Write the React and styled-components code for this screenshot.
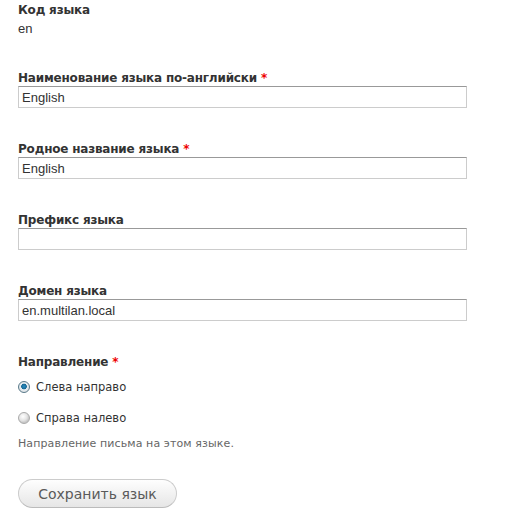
import React, { useState } from 'react';
import styled, { createGlobalStyle } from 'styled-components';

const GlobalStyle = createGlobalStyle`
  body {
    margin: 0;
    background: #fff;
    font-family: "DejaVu Sans", Verdana, sans-serif;
    color: #333;
  }
`;

const Form = styled.form`
  display: flex;
  flex-direction: column;
  padding: 2px 18px 0 18px;
  width: 449px;
`;

const Item = styled.div`
  display: flex;
  flex-direction: column;
  margin-bottom: ${(p) => p.gap || 33}px;
`;

const Label = styled.label`
  font-size: 12px;
  font-weight: bold;
  line-height: 16px;
  color: #333;
  letter-spacing: -0.2px;
`;

const Required = styled.span`
  color: #e00;
  margin-left: 4px;
`;

const Value = styled.div`
  font-family: "Liberation Sans", Arial, sans-serif;
  font-size: 13px;
  line-height: 16px;
  color: #333;
  margin-top: 3px;
`;

const TextInput = styled.input`
  box-sizing: border-box;
  height: 22px;
  width: 100%;
  padding: 2px 3px;
  font-family: "Liberation Sans", Arial, sans-serif;
  font-size: 13px;
  color: #333;
  border: 1px solid #ccc;
  border-top-color: #999;
  background: #fff;
  outline: none;
  margin: 0;
`;

const Radio = styled.label`
  display: flex;
  align-items: center;
  font-size: 11.5px;
  line-height: 16px;
  color: #333;
  margin-top: ${(p) => p.top}px;
  cursor: pointer;
`;

const Dot = styled.span`
  box-sizing: border-box;
  width: 12px;
  height: 12px;
  border-radius: 50%;
  margin-right: 6px;
  border: 1px solid ${(p) => (p.checked ? '#5a7a8a' : '#aaa')};
  background: ${(p) =>
    p.checked
      ? 'radial-gradient(circle at 50% 45%, #2a8fc4 0, #1a6a96 2.5px, #e8eef2 3.2px, #d8dde0 6px)'
      : 'radial-gradient(circle at 40% 35%, #fff 0, #e4e4e4 4px, #c8c8c8 6px)'};
`;

const Description = styled.div`
  font-size: 11px;
  line-height: 14px;
  color: #666;
  margin-top: 11px;
  letter-spacing: 0.1px;
`;

const Button = styled.button`
  align-self: flex-start;
  width: 159px;
  height: 29px;
  border-radius: 15px;
  border: 1px solid #ccc;
  border-bottom-color: #bbb;
  background: linear-gradient(#fefefe, #e6e6e6);
  color: #5a5a5a;
  font-family: "DejaVu Sans", Verdana, sans-serif;
  font-size: 14px;
  padding: 0;
  cursor: pointer;
`;

function App() {
  const [direction, setDirection] = useState('ltr');
  const [fields, setFields] = useState({
    name: 'English',
    native: 'English',
    prefix: '',
    domain: 'en.multilan.local',
  });

  const update = (key) => (e) => setFields({ ...fields, [key]: e.target.value });

  return (
    <>
      <GlobalStyle />
      <Form onSubmit={(e) => e.preventDefault()}>
        <Item gap={33}>
          <Label>Код языка</Label>
          <Value>en</Value>
        </Item>
        <Item>
          <Label>
            Наименование языка по-английски<Required>*</Required>
          </Label>
          <TextInput value={fields.name} onChange={update('name')} />
        </Item>
        <Item>
          <Label>
            Родное название языка<Required>*</Required>
          </Label>
          <TextInput value={fields.native} onChange={update('native')} />
        </Item>
        <Item>
          <Label>Префикс языка</Label>
          <TextInput value={fields.prefix} onChange={update('prefix')} />
        </Item>
        <Item>
          <Label>Домен языка</Label>
          <TextInput value={fields.domain} onChange={update('domain')} />
        </Item>
        <Item gap={28}>
          <Label>
            Направление<Required>*</Required>
          </Label>
          <Radio top={9} onClick={() => setDirection('ltr')}>
            <Dot checked={direction === 'ltr'} />
            Слева направо
          </Radio>
          <Radio top={15} onClick={() => setDirection('rtl')}>
            <Dot checked={direction === 'rtl'} />
            Справа налево
          </Radio>
          <Description>Направление письма на этом языке.</Description>
        </Item>
        <Button type="submit">Сохранить язык</Button>
      </Form>
    </>
  );
}

export default App;
